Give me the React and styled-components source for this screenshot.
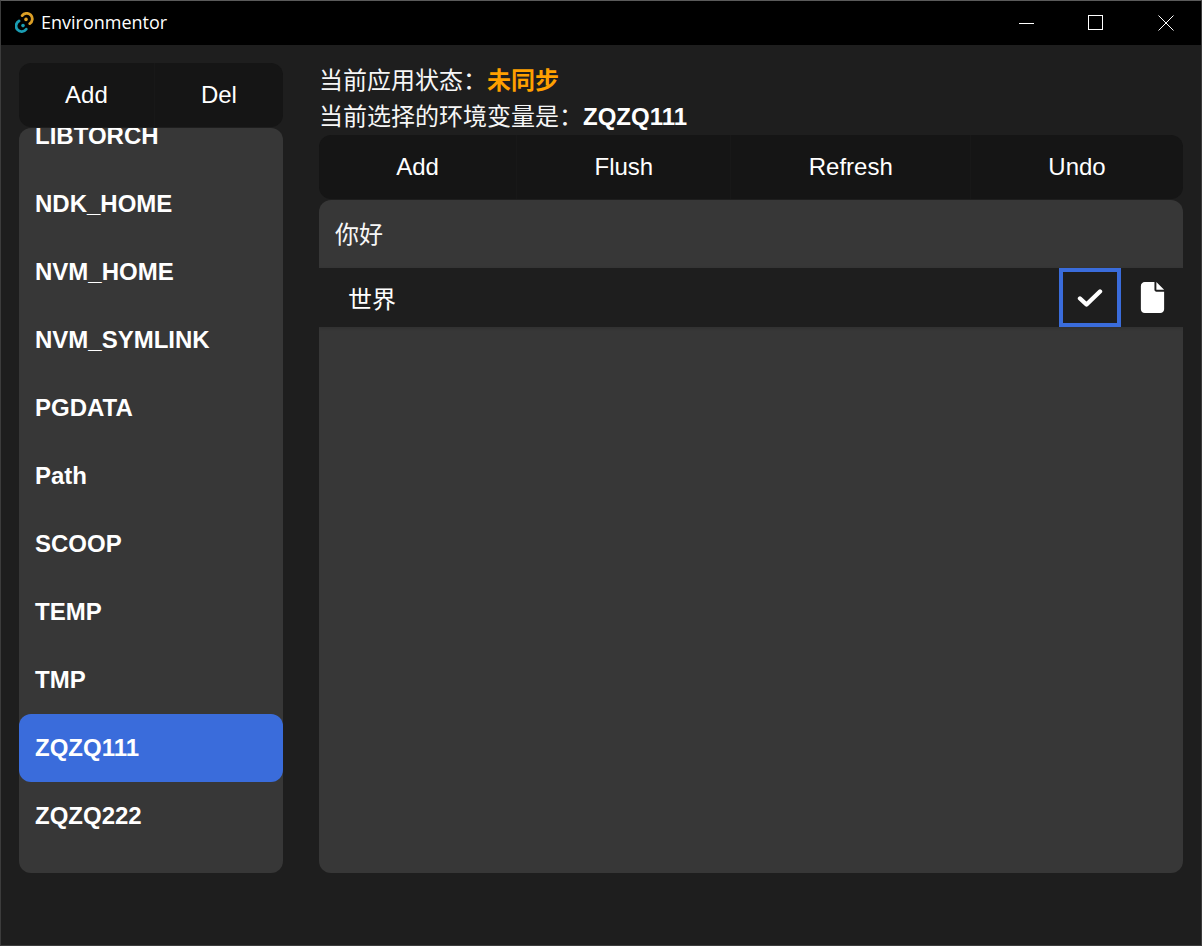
import React from 'react';
import styled, { createGlobalStyle } from 'styled-components';
import { FaFile } from 'react-icons/fa6';

const GlobalStyle = createGlobalStyle`
    html, body {
        margin: 0;
        padding: 0;
        background: #1e1e1e;
    }
    * {
        box-sizing: border-box;
    }
`;

const Window = styled.div`
    width: 1202px;
    height: 946px;
    display: flex;
    flex-direction: column;
    border: 1px solid #3c3c3c;
    border-top-color: #5a5a5a;
    background: #1e1e1e;
    color: #f6f6f6;
    font-family: "Liberation Sans", "Noto Sans CJK SC", sans-serif;
    font-size: 24px;
    overflow: hidden;
`;

const TitleBar = styled.div`
    height: 44px;
    flex: none;
    display: flex;
    align-items: center;
    background: #000;
`;

const TitleLogo = styled.svg`
    width: 20px;
    height: 21px;
    margin-left: 14px;
    margin-bottom: 1px;
`;

const TitleText = styled.span`
    margin-left: 6px;
    margin-bottom: 3px;
    flex: 1;
    font-family: "Open Sans", sans-serif;
    font-size: 18px;
    color: #fff;
`;

const WinButton = styled.div`
    width: 70px;
    height: 44px;
    display: flex;
    align-items: center;
    justify-content: center;
    color: #fff;
`;

const Main = styled.div`
    display: flex;
    gap: 36px;
    padding: 18px 18px 0;
    height: 828px;
`;

const Sidebar = styled.div`
    width: 264px;
    flex: none;
    display: flex;
    flex-direction: column;
    gap: 1px;
`;

const ButtonGroup = styled.div`
    height: 64px;
    flex: none;
    display: flex;
    background: #151515;
    border-radius: 12px;
    overflow: hidden;
`;

const GroupButton = styled.div`
    flex: 1 1 auto;
    display: flex;
    align-items: center;
    justify-content: center;
    padding: 0 8px;
    color: #fff;
    border-left: ${props => (props.$first ? 'none' : '1px solid #181818')};
`;

const EnvList = styled.div`
    flex: 1;
    background: #373737;
    border-radius: 12px;
    overflow: hidden;
`;

const EnvStack = styled.div`
    margin-top: -26px;
`;

const EnvItem = styled.div`
    height: 68px;
    display: flex;
    align-items: center;
    padding-left: 16px;
    font-weight: 700;
    color: #fff;
    border-radius: 12px;
    background: ${props => (props.$active ? '#3a6cdb' : 'transparent')};
`;

const Content = styled.div`
    flex: 1;
    display: flex;
    flex-direction: column;
`;

const StatusLine = styled.div`
    height: 36px;
    line-height: 36px;
    white-space: nowrap;
`;

const StatusValue = styled.b`
    color: ${props => props.$color || '#fff'};
`;

const Panel = styled.div`
    flex: 1;
    margin-top: 1px;
    background: #373737;
    border-radius: 12px;
    overflow: hidden;
`;

const PanelHead = styled.div`
    height: 68px;
    display: flex;
    align-items: center;
    padding: 0 0 4px 16px;
`;

const ValueRow = styled.div`
    height: 59px;
    display: flex;
    align-items: center;
    padding-left: 29px;
    background: #1e1e1e;
    box-shadow: 0 1px 3px rgba(0, 0, 0, 0.15);
`;

const ValueText = styled.span`
    flex: 1;
    color: #fff;
    padding-bottom: 1px;
`;

const IconButton = styled.div`
    width: 62px;
    height: 59px;
    display: flex;
    align-items: center;
    justify-content: center;
    color: #fff;
    border: ${props => (props.$focused ? '4px solid #3a6cdb' : 'none')};
`;

const envs = [
    'LIBTORCH',
    'NDK_HOME',
    'NVM_HOME',
    'NVM_SYMLINK',
    'PGDATA',
    'Path',
    'SCOOP',
    'TEMP',
    'TMP',
    'ZQZQ111',
    'ZQZQ222',
];

function Logo() {
    return (
        <TitleLogo viewBox="0 0 20 21" fill="none">
            <path d="M7.2 3.6 A5.6 5.6 0 1 1 14.8 11.6" stroke="#dc9f26" strokeWidth="2.8" strokeLinecap="round" />
            <path d="M11.2 17.2 A5.6 5.6 0 1 1 4 9" stroke="#1a9db3" strokeWidth="2.8" strokeLinecap="round" />
            <circle cx="11" cy="7.4" r="1.8" fill="#dc9f26" />
            <circle cx="8" cy="13.6" r="1.8" fill="#1a9db3" />
        </TitleLogo>
    );
}

function CheckIcon() {
    return (
        <svg width="26" height="20" viewBox="0 0 26 20" fill="none">
            <path d="M3 10.5L9.5 16.5L23 3.5" stroke="#fff" strokeWidth="4.4" strokeLinecap="round" strokeLinejoin="round" />
        </svg>
    );
}

export default function App() {
    return (
        <Window>
            <GlobalStyle />
            <TitleBar>
                <Logo />
                <TitleText>Environmentor</TitleText>
                <WinButton>
                    <svg width="16" height="16" viewBox="0 0 16 16"><path d="M1 8.5H16" stroke="#fff" strokeWidth="1" /></svg>
                </WinButton>
                <WinButton>
                    <svg width="16" height="16" viewBox="0 0 16 16" fill="none"><rect x="0.5" y="0.5" width="14" height="14" stroke="#fff" /></svg>
                </WinButton>
                <WinButton>
                    <svg width="16" height="16" viewBox="0 0 16 16" fill="none"><path d="M0.5 0.5L15.5 15.5M15.5 0.5L0.5 15.5" stroke="#fff" /></svg>
                </WinButton>
            </TitleBar>
            <Main>
                <Sidebar>
                    <ButtonGroup>
                        <GroupButton $first>Add</GroupButton>
                        <GroupButton>Del</GroupButton>
                    </ButtonGroup>
                    <EnvList>
                        <EnvStack>
                            {envs.map(name => (
                                <EnvItem key={name} $active={name === 'ZQZQ111'}>{name}</EnvItem>
                            ))}
                        </EnvStack>
                    </EnvList>
                </Sidebar>
                <Content>
                    <StatusLine>当前应用状态{'\uFF1A'}<StatusValue $color="#ffa000">未同步</StatusValue></StatusLine>
                    <StatusLine>当前选择的环境变量是{'\uFF1A'}<StatusValue>ZQZQ111</StatusValue></StatusLine>
                    <ButtonGroup>
                        <GroupButton $first>Add</GroupButton>
                        <GroupButton>Flush</GroupButton>
                        <GroupButton>Refresh</GroupButton>
                        <GroupButton>Undo</GroupButton>
                    </ButtonGroup>
                    <Panel>
                        <PanelHead>你好</PanelHead>
                        <ValueRow>
                            <ValueText>世界</ValueText>
                            <IconButton $focused><CheckIcon /></IconButton>
                            <IconButton><FaFile size={31} /></IconButton>
                        </ValueRow>
                    </Panel>
                </Content>
            </Main>
        </Window>
    );
}
